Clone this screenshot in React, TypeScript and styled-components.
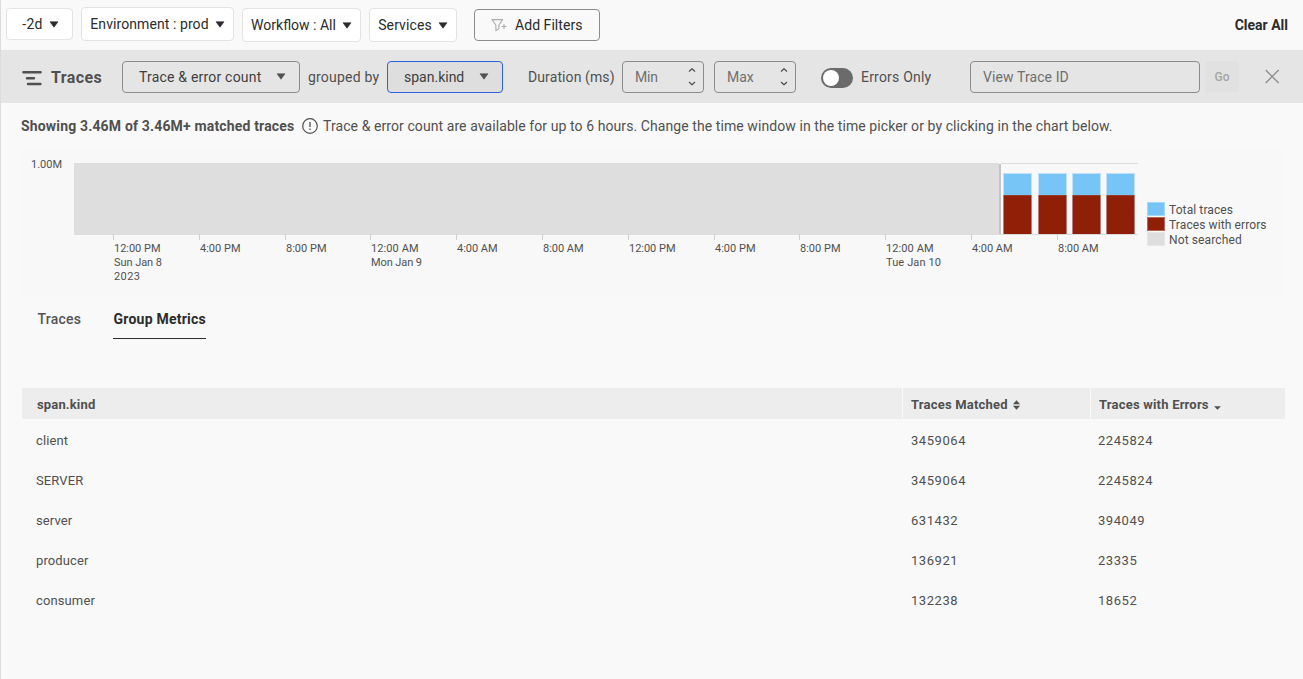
import React from "react";
import styled, { createGlobalStyle } from "styled-components";

const GlobalStyle = createGlobalStyle`
  * { box-sizing: border-box; }
  body {
    margin: 0;
    background: #f9f9f9;
    color: #505050;
    font-family: Roboto, "Liberation Sans", sans-serif;
    font-size: 14px;
  }
  button, input { font-family: inherit; margin: 0; }
`;

const Page = styled.div`
  width: 100%;
  height: 679px;
  border-left: 1px solid #dcdcdc;
  overflow: hidden;
`;

const Text = styled.span<{ $track?: number }>`
  letter-spacing: ${(p) => p.$track ?? 0}px;
  white-space: nowrap;
`;

const FilterBar = styled.header`
  display: flex;
  align-items: flex-start;
  height: 50px;
  padding: 7px 15px 0 5px;
`;

const FilterChip = styled.button<{ $w: number; $h: number; $drop?: number; $shift?: number }>`
  display: flex;
  align-items: center;
  justify-content: center;
  gap: 6px;
  width: ${(p) => p.$w}px;
  height: ${(p) => p.$h}px;
  margin: ${(p) => p.$drop ?? 0}px 8px 0 0;
  padding: 0 0 0 ${(p) => p.$shift ?? 0}px;
  border: 1px solid #e3e3e3;
  border-radius: 4px;
  background: #fff;
  color: #2b2b2b;
  font-size: 14px;
`;

const AddFilters = styled.button`
  display: flex;
  align-items: center;
  gap: 7px;
  width: 126px;
  height: 32px;
  margin: 2px 0 0 9px;
  padding: 0 0 0 16px;
  border: 1px solid #8c8c8c;
  border-radius: 4px;
  background: transparent;
  color: #2b2b2b;
  font-size: 14px;
`;

const ClearAll = styled.button`
  margin: 10px 0 0 auto;
  padding: 0;
  border: 0;
  background: none;
  color: #2b2b2b;
  font-size: 14px;
  font-weight: 700;
  line-height: 17px;
`;

const TraceBar = styled.section`
  display: flex;
  align-items: center;
  height: 53px;
  padding: 0 23px 0 21px;
  background: #e5e5e5;
`;

const BarHeading = styled.div`
  display: flex;
  align-items: center;
  width: 100px;
  padding-top: 2px;
`;

const BarTitle = styled.h1`
  margin: 0 0 0 9px;
  font-size: 16px;
  font-weight: 700;
`;

const Select = styled.button<{ $w: number; $focused?: boolean }>`
  display: flex;
  align-items: center;
  justify-content: space-between;
  flex-shrink: 0;
  width: ${(p) => p.$w}px;
  height: 32px;
  padding: 0 13px 0 16px;
  border: 1px solid ${(p) => (p.$focused ? "#2b62d9" : "#8c8c8c")};
  border-radius: 4px;
  background: ${(p) => (p.$focused ? "#dedede" : "transparent")};
  color: #404040;
  font-size: 14px;
`;

const BarLabel = styled.span<{ $w: number; $gap: number }>`
  width: ${(p) => p.$w}px;
  margin-left: ${(p) => p.$gap}px;
  white-space: nowrap;
`;

const NumberField = styled.div<{ $gap: number }>`
  display: flex;
  align-items: center;
  justify-content: space-between;
  width: 82px;
  height: 32px;
  margin-left: ${(p) => p.$gap}px;
  padding: 0 7px 0 12px;
  border: 1px solid #8c8c8c;
  border-radius: 4px;
  color: #6f6f6f;
`;

const Switch = styled.div`
  width: 32px;
  height: 20px;
  margin: 2px 0 0 25px;
  padding: 2px;
  border-radius: 10px;
  background: #6b6b6b;
`;

const Knob = styled.div`
  width: 16px;
  height: 16px;
  border-radius: 50%;
  background: #fff;
`;

const TraceIdField = styled.div`
  width: 230px;
  height: 32px;
  margin-left: auto;
  padding: 0 12px;
  border: 1px solid #8c8c8c;
  border-radius: 4px;
  color: #6f6f6f;
  line-height: 30px;
`;

const GoButton = styled.button`
  width: 34px;
  height: 31px;
  margin: 0 26px 0 5px;
  padding: 0;
  border: 0;
  border-radius: 3px;
  background: #e1e1e1;
  color: #a5a5a5;
  font-size: 12px;
  font-weight: 500;
`;

const Summary = styled.div`
  display: flex;
  align-items: center;
  height: 47px;
  padding: 0 0 2px 20px;
  white-space: nowrap;
`;

const SummaryCount = styled.strong`
  width: 281px;
  font-weight: 700;
`;

const SummaryNote = styled.span`
  margin-left: 5px;
`;

const ChartPanel = styled.section`
  display: flex;
  width: 1264px;
  height: 147px;
  margin-left: 20px;
  background: #f8f8f8;
`;

const Legend = styled.ul`
  margin: 52px 0 0 6px;
  padding: 0;
  list-style: none;
  font-size: 12px;
`;

const LegendItem = styled.li`
  display: flex;
  align-items: flex-start;
  gap: 4px;
  height: 15px;
  line-height: 16px;
`;

const Swatch = styled.span<{ $fill: string; $edge: string }>`
  width: 18px;
  height: 14px;
  border: 1px solid ${(p) => p.$edge};
  background: ${(p) => p.$fill};
`;

const Tabs = styled.nav`
  display: flex;
  gap: 32px;
  height: 91px;
  padding-left: 36px;
`;

const Tab = styled.button<{ $w: number; $active?: boolean }>`
  width: ${(p) => p.$w}px;
  height: 42px;
  padding: 2px 0 0 0.6px;
  border: 0;
  border-bottom: 1px solid ${(p) => (p.$active ? "#2b2b2b" : "transparent")};
  background: none;
  color: ${(p) => (p.$active ? "#2b2b2b" : "#555")};
  font-size: 14px;
  font-weight: ${(p) => (p.$active ? 700 : 500)};
  text-align: left;
`;

const Table = styled.div`
  width: 1263px;
  margin-left: 21px;
  font-size: 13px;
`;

const TableHead = styled.div`
  display: grid;
  grid-template-columns: 880px 187px 194px;
  column-gap: 1px;
  height: 31px;
  margin-bottom: 1px;
  font-weight: 700;
`;

const HeadCell = styled.div<{ $pad: number }>`
  display: flex;
  align-items: center;
  gap: 4px;
  padding: 2px 0 0 ${(p) => p.$pad}px;
  background: #ededed;
`;

const TableRow = styled.div`
  display: grid;
  grid-template-columns: 880px 187px 194px;
  column-gap: 1px;
  align-items: center;
  height: 40px;
`;

const Cell = styled.div<{ $pad: number }>`
  padding-left: ${(p) => p.$pad}px;
`;

const Caret = ({ color = "#2b2b2b" }: { color?: string }) => (
  <svg width="10" height="7" viewBox="0 0 10 7">
    <path d="M1 .8h8L5 6.2z" fill={color} stroke={color} strokeWidth=".6" strokeLinejoin="round" />
  </svg>
);

const FilterIcon = () => (
  <svg width="17" height="14" viewBox="0 0 17 14" fill="none" stroke="#ababab" strokeWidth="1.1" strokeLinejoin="round">
    <path d="M1 1.6h10.6L7.9 7v3.6l-3 2V7z" />
    <path d="M13 6v5M10.5 8.5h5" />
  </svg>
);

const TracesIcon = () => (
  <svg width="20" height="16" viewBox="0 0 20 16" stroke="#505050" strokeWidth="2.4" strokeLinecap="round">
    <path d="M1.4 2.2h17.2M5 8.2h7M6 14h12.4" />
  </svg>
);

const Stepper = () => (
  <svg width="8" height="20" viewBox="0 0 8 20" fill="none" stroke="#505050" strokeWidth="1.2" strokeLinecap="round" strokeLinejoin="round">
    <path d="M1.3 4.2 4 1.7l2.7 2.5M1.3 15.3 4 17.8l2.7-2.5" />
  </svg>
);

const CloseIcon = () => (
  <svg width="15" height="15" viewBox="0 0 15 15" stroke="#8c8c8c" strokeWidth="1.3">
    <path d="m.7 1 13 13M13.7 1 .7 14" />
  </svg>
);

const InfoIcon = () => (
  <svg width="16" height="16" viewBox="0 0 16 16" fill="none" stroke="#505050" strokeWidth="1.2">
    <circle cx="8" cy="8" r="7.3" />
    <path d="M8 4v5M8 10.6V12" strokeWidth="1.3" />
  </svg>
);

const SortBoth = () => (
  <svg width="9" height="10" viewBox="0 0 9 10" fill="#505050">
    <path d="M4.5 .3 8.1 4.3H.9zM4.5 9.7 8.1 5.7H.9z" />
  </svg>
);

const SortDown = () => (
  <svg width="9" height="10" viewBox="0 0 9 10" fill="#505050">
    <path d="M4.5 9.7 7.9 6.2H1.1z" />
  </svg>
);

const ticks: { x: number; lines: [string, number][] }[] = [
  { x: 92.5, lines: [["12:00 PM", 46.5], ["Sun Jan 8", 48], ["2023", 26]] },
  { x: 178.5, lines: [["4:00 PM", 40.5]] },
  { x: 264.5, lines: [["8:00 PM", 40.5]] },
  { x: 349.5, lines: [["12:00 AM", 47.5], ["Mon Jan 9", 51]] },
  { x: 435.5, lines: [["4:00 AM", 40.5]] },
  { x: 521.5, lines: [["8:00 AM", 40.5]] },
  { x: 607.5, lines: [["12:00 PM", 46.5]] },
  { x: 693.5, lines: [["4:00 PM", 40.5]] },
  { x: 778.5, lines: [["8:00 PM", 40.5]] },
  { x: 864.5, lines: [["12:00 AM", 47.5], ["Tue Jan 10", 55]] },
  { x: 950.5, lines: [["4:00 AM", 40.5]] },
  { x: 1036.5, lines: [["8:00 AM", 40.5]] },
];

const bars = [982, 1017, 1051, 1085];

const TraceChart = () => (
  <svg width="1120" height="147" viewBox="0 0 1120 147" fontSize="11" fill="#505050">
    <text x="10" y="18" textLength="31">1.00M</text>
    <rect x="53" y="13" width="925" height="72" fill="#dedede" />
    <path d="M980 13.5h137M978 84.5h139" stroke="#dcdcdc" />
    <rect x="978" y="14" width="2" height="70" fill="#c4c4c4" />
    {bars.map((x) => (
      <g key={x}>
        <rect x={x} y="23" width="29" height="23" fill="#bfe2fa" />
        <rect x={x + 1} y="24" width="27" height="22" fill="#77c5f7" />
        <rect x={x} y="45" width="29" height="39" fill="#b97c79" />
        <rect x={x + 1} y="45.3" width="27" height="38.7" fill="#901f08" />
      </g>
    ))}
    {ticks.map((t) => (
      <g key={t.x}>
        <path d={`M${t.x} 84v6`} stroke="#cfcfcf" />
        {t.lines.map(([label, width], i) => (
          <text key={label} x={t.x + 0.5} y={102 + i * 14} textLength={width}>
            {label}
          </text>
        ))}
      </g>
    ))}
  </svg>
);

const rows = [
  { kind: "client", matched: "3459064", errors: "2245824" },
  { kind: "SERVER", matched: "3459064", errors: "2245824" },
  { kind: "server", matched: "631432", errors: "394049" },
  { kind: "producer", matched: "136921", errors: "23335" },
  { kind: "consumer", matched: "132238", errors: "18652" },
];

export default function App() {
  return (
    <Page>
      <GlobalStyle />
      <FilterBar>
        <FilterChip $w={67} $h={32} $drop={1} $shift={2}><Text $track={0.3}>-2d</Text><Caret /></FilterChip>
        <FilterChip $w={153} $h={34}><Text $track={0.08}>Environment : prod</Text><Caret /></FilterChip>
        <FilterChip $w={119} $h={34} $drop={1}><Text>Workflow : All</Text><Caret /></FilterChip>
        <FilterChip $w={88} $h={34} $drop={1}><Text $track={0.1}>Services</Text><Caret /></FilterChip>
        <AddFilters><FilterIcon /><Text $track={0.05}>Add Filters</Text></AddFilters>
        <ClearAll><Text>Clear All</Text></ClearAll>
      </FilterBar>
      <TraceBar>
        <BarHeading>
          <TracesIcon />
          <BarTitle><Text $track={0.4}>Traces</Text></BarTitle>
        </BarHeading>
        <Select $w={178}><Text $track={0.2}>Trace &amp; error count</Text><Caret color="#505050" /></Select>
        <BarLabel $w={79} $gap={8}><Text $track={0.2}>grouped by</Text></BarLabel>
        <Select $w={116} $focused><Text>span.kind</Text><Caret color="#505050" /></Select>
        <BarLabel $w={86} $gap={25}><Text $track={0.1}>Duration (ms)</Text></BarLabel>
        <NumberField $gap={8}><Text $track={-0.2}>Min</Text><Stepper /></NumberField>
        <NumberField $gap={10}><Text>Max</Text><Stepper /></NumberField>
        <Switch><Knob /></Switch>
        <BarLabel $w={71} $gap={8}><Text $track={0.2}>Errors Only</Text></BarLabel>
        <TraceIdField><Text $track={0.1}>View Trace ID</Text></TraceIdField>
        <GoButton>Go</GoButton>
        <CloseIcon />
      </TraceBar>
      <Summary>
        <SummaryCount><Text $track={0.165}>Showing 3.46M of 3.46M+ matched traces</Text></SummaryCount>
        <InfoIcon />
        <SummaryNote>
          <Text $track={0.08}>
            Trace &amp; error count are available for up to 6 hours. Change the time window in the time picker or by clicking in the chart below.
          </Text>
        </SummaryNote>
      </Summary>
      <ChartPanel>
        <TraceChart />
        <Legend>
          <LegendItem><Swatch $fill="#77c5f7" $edge="#a5d8f9" /><Text $track={0.1}>Total traces</Text></LegendItem>
          <LegendItem><Swatch $fill="#901f08" $edge="#b5675a" /><Text $track={0.1}>Traces with errors</Text></LegendItem>
          <LegendItem><Swatch $fill="#dedede" $edge="#e6e6e6" /><Text $track={0.12}>Not searched</Text></LegendItem>
        </Legend>
      </ChartPanel>
      <Tabs>
        <Tab $w={44}><Text $track={0.2}>Traces</Text></Tab>
        <Tab $w={93} $active><Text $track={0.22}>Group Metrics</Text></Tab>
      </Tabs>
      <Table>
        <TableHead>
          <HeadCell $pad={15}><Text $track={0.15}>span.kind</Text></HeadCell>
          <HeadCell $pad={8}><Text $track={0.2}>Traces Matched</Text><SortBoth /></HeadCell>
          <HeadCell $pad={8}><Text $track={0.2}>Traces with Errors</Text><SortDown /></HeadCell>
        </TableHead>
        {rows.map((r) => (
          <TableRow key={r.kind}>
            <Cell $pad={14}><Text $track={0.12}>{r.kind}</Text></Cell>
            <Cell $pad={8}><Text $track={0.55}>{r.matched}</Text></Cell>
            <Cell $pad={7}><Text $track={0.55}>{r.errors}</Text></Cell>
          </TableRow>
        ))}
      </Table>
    </Page>
  );
}
